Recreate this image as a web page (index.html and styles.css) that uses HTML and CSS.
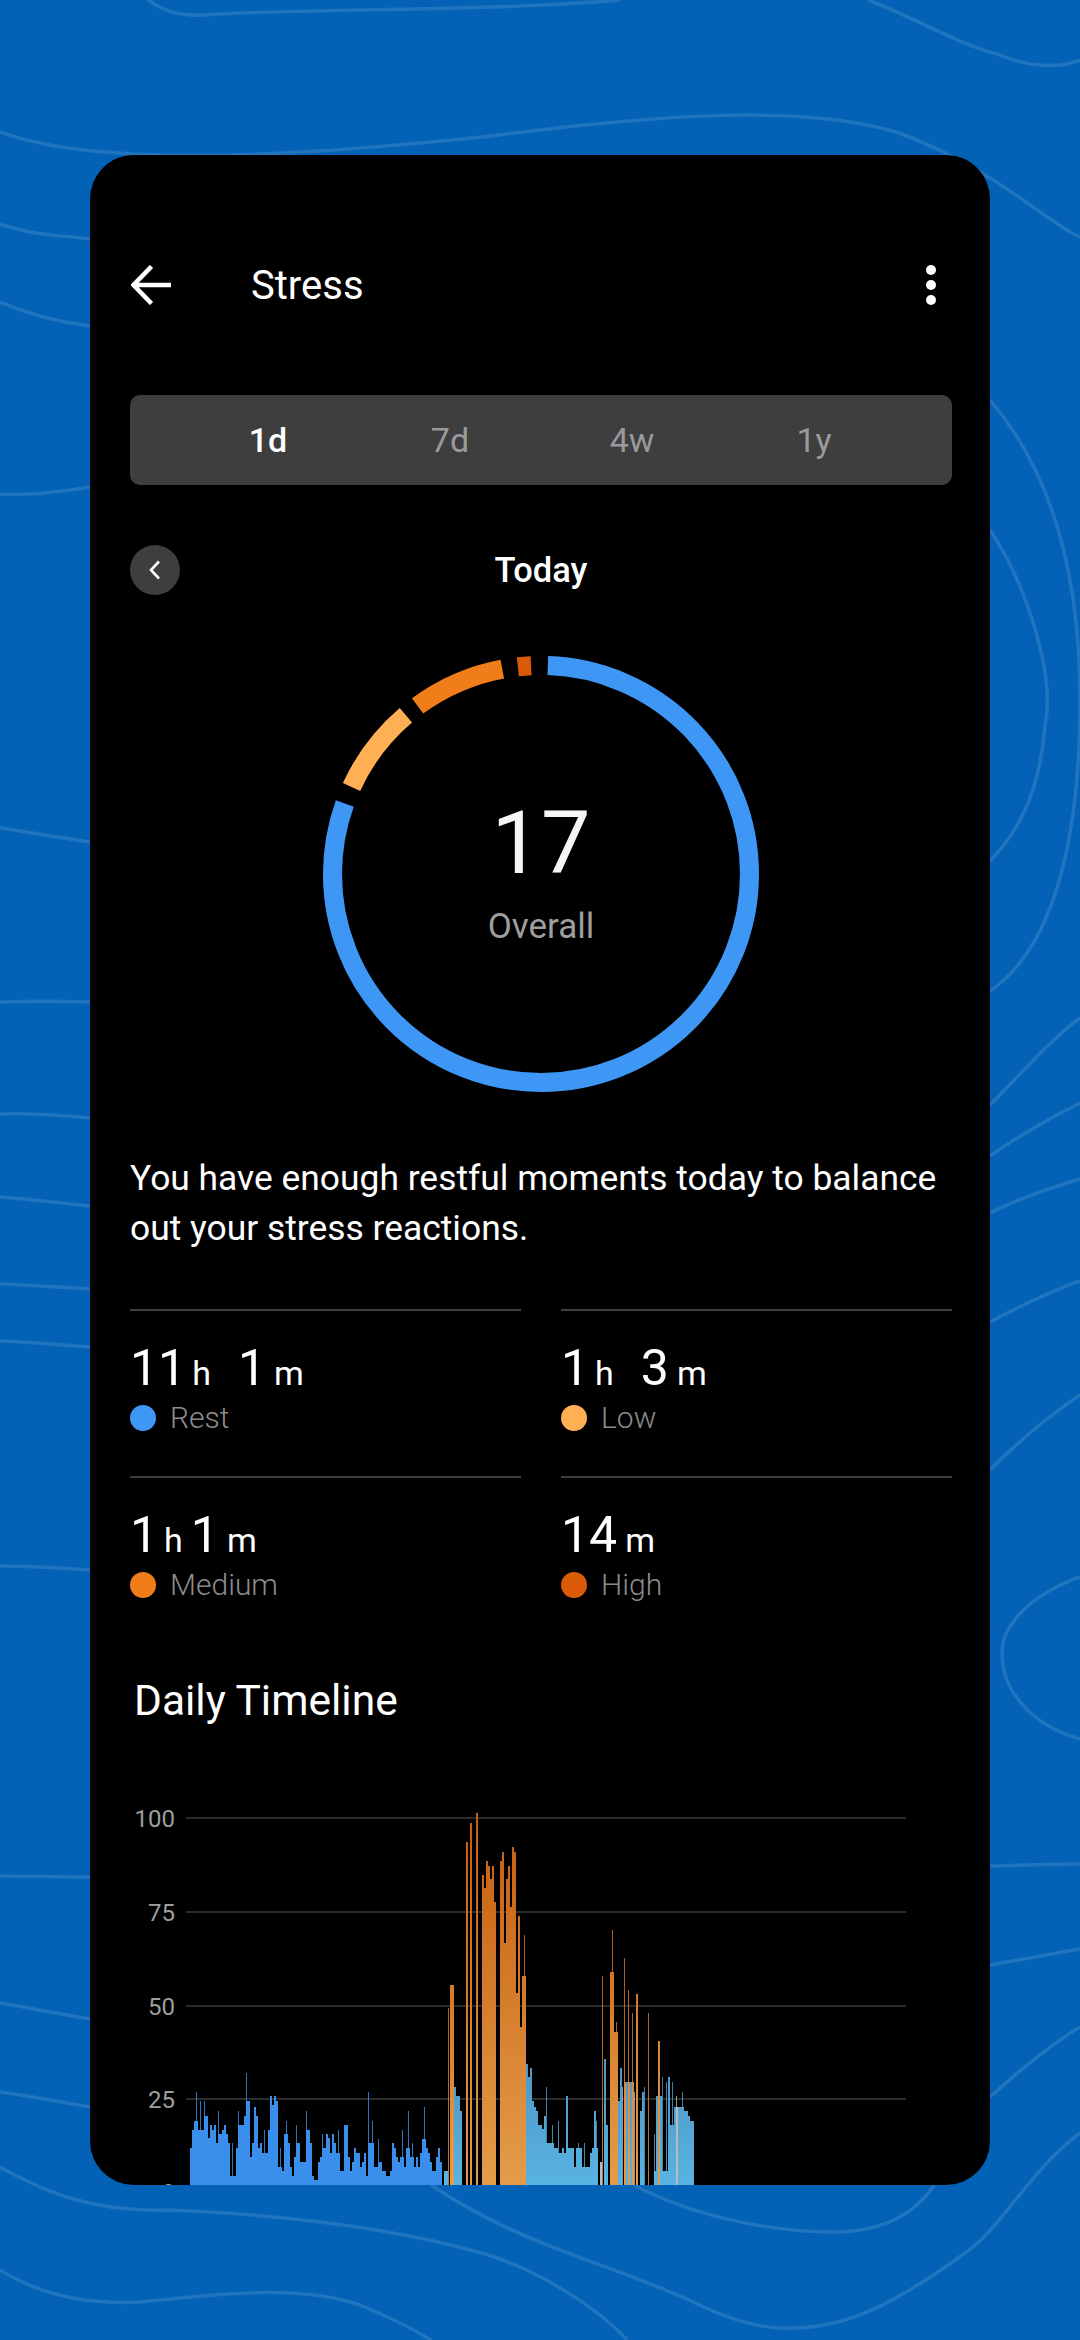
FILE: index.html
```html
<!DOCTYPE html>
<html lang="en">
<head>
  <meta charset="UTF-8">
  <meta name="viewport" content="width=device-width, initial-scale=1.0">
  <title>Stress</title>
  <link rel="stylesheet" href="styles.css">
</head>
<body>
  <svg class="bg-lines" viewBox="0 0 1080 2340" fill="none">
    <path d="M148 0C165 12 180 16 205 15C300 8 480 12 620 0"/>
    <path d="M868 0C920 20 960 45 1000 55C1030 68 1060 68 1080 60"/>
    <path d="M0 132C90 165 260 160 482 137C620 120 790 100 896 132C990 165 1050 225 1080 237"/>
    <path d="M0 224C30 235 60 235 90 239"/>
    <path d="M0 302C30 315 60 322 90 326"/>
    <path d="M0 494C30 496 60 492 90 487"/>
    <path d="M990 400C1050 470 1080 570 1080 700C1080 850 1050 950 990 991"/>
    <path d="M990 530C1030 590 1055 680 1045 725C1040 790 1020 830 990 861"/>
    <path d="M990 1105C1020 1075 1050 1040 1080 1018"/>
    <path d="M990 1156C1020 1135 1050 1118 1080 1103"/>
    <path d="M990 1213C1020 1198 1050 1188 1080 1179"/>
    <path d="M990 1322C1020 1306 1050 1292 1080 1281"/>
    <path d="M990 1470C1020 1440 1050 1415 1080 1395"/>
    <path d="M1080 1577C1030 1595 1002 1625 1002 1653C1002 1690 1030 1725 1080 1739"/>
    <path d="M990 1866C1020 1865 1050 1864 1080 1864"/>
    <path d="M990 1965C1020 1960 1050 1954 1080 1949"/>
    <path d="M990 2097C1020 2070 1050 2045 1080 2027"/>
    <path d="M0 828C30 832 60 838 90 842"/>
    <path d="M0 1002C30 1001 60 1001 90 1002"/>
    <path d="M0 1114C30 1113 60 1115 90 1118"/>
    <path d="M0 1197C30 1199 60 1203 90 1206"/>
    <path d="M0 1284C30 1285 60 1287 90 1289"/>
    <path d="M0 1341C30 1342 60 1345 90 1347"/>
    <path d="M0 1566C30 1566 60 1568 90 1570"/>
    <path d="M0 1876C30 1876 60 1877 90 1877"/>
    <path d="M0 2003C30 2008 60 2014 90 2019"/>
    <path d="M0 2092C30 2096 60 2102 90 2107"/>
    <path d="M0 2167C50 2195 95 2212 170 2210C290 2215 400 2230 482 2253C540 2270 600 2310 627 2340"/>
    <path d="M0 2270C40 2295 85 2305 140 2302C230 2292 310 2285 365 2307C395 2320 415 2330 431 2340"/>
    <path d="M431 2185C520 2245 600 2260 689 2300C725 2318 760 2330 792 2328C850 2328 900 2300 965 2253C1000 2230 1030 2170 1080 2133"/>
    <path d="M634 2185C700 2220 780 2232 834 2232C880 2232 915 2215 934 2185"/>
  </svg>

  <main class="card">
    <header class="topbar">
      <svg class="back-icon" viewBox="0 0 40 40" fill="none" stroke="#fff" stroke-width="4.500">
        <path d="M40 20H4M20.500 1.500L2.500 20L20.500 38.500"/>
      </svg>
      <h1 class="page-title">Stress</h1>
      <svg class="more-icon" viewBox="0 0 10 40" fill="#fff">
        <circle cx="5" cy="5" r="5"/>
        <circle cx="5" cy="20" r="5"/>
        <circle cx="5" cy="35" r="5"/>
      </svg>
    </header>

    <nav class="range-tabs">
      <span class="tab active">1d</span>
      <span class="tab">7d</span>
      <span class="tab">4w</span>
      <span class="tab">1y</span>
    </nav>

    <div class="date-row">
      <span class="prev-btn">
        <svg viewBox="0 0 12 20" fill="none" stroke="#fff" stroke-width="2.600">
          <path d="M10 1.500L2 10L10 18.500"/>
        </svg>
      </span>
      <span class="date-label">Today</span>
    </div>

    <section class="ring">
      <svg class="ring-svg" viewBox="0 0 440 440" fill="none" stroke-width="19">
        <circle cx="220" cy="220" r="208.500" pathLength="360" stroke="#3f97f5" stroke-dasharray="287.900 72.100" stroke-dashoffset="-1.900"/>
        <circle cx="220" cy="220" r="208.500" pathLength="360" stroke="#ffaf54" stroke-dasharray="24.900 335.100" stroke-dashoffset="-294.700"/>
        <circle cx="220" cy="220" r="208.500" pathLength="360" stroke="#f07d1a" stroke-dasharray="25.600 334.400" stroke-dashoffset="-323.700"/>
        <circle cx="220" cy="220" r="208.500" pathLength="360" stroke="#db5a07" stroke-dasharray="3.650 356.350" stroke-dashoffset="-353.600"/>
      </svg>
      <div class="ring-text">
        <div class="ring-value">17</div>
        <div class="ring-label">Overall</div>
      </div>
    </section>

    <p class="summary">You have enough restful moments today to balance<br>out your stress reactions.</p>

    <div class="stats">
      <div class="stat">
        <div class="stat-value">11<small class="hours">h</small><span class="gap"></span>1<small>m</small></div>
        <div class="stat-label"><i class="dot rest"></i>Rest</div>
      </div>
      <div class="stat">
        <div class="stat-value">1<small class="hours">h</small><span class="gap"></span>3<small>m</small></div>
        <div class="stat-label"><i class="dot low"></i>Low</div>
      </div>
      <div class="stat">
        <div class="stat-value">1<small class="hours">h</small>1<small>m</small></div>
        <div class="stat-label"><i class="dot medium"></i>Medium</div>
      </div>
      <div class="stat">
        <div class="stat-value">14<small>m</small></div>
        <div class="stat-label"><i class="dot high"></i>High</div>
      </div>
    </div>

    <h2 class="section-title">Daily Timeline</h2>

    <svg id="timeline" class="timeline" viewBox="90 1790 900 420">
      <defs>
        <linearGradient id="gradRest" gradientUnits="userSpaceOnUse" x1="0" y1="1950" x2="0" y2="2185">
          <stop offset="0" stop-color="#4a78a8"/>
          <stop offset="1" stop-color="#58b4e2"/>
        </linearGradient>
        <linearGradient id="gradStress" gradientUnits="userSpaceOnUse" x1="0" y1="1820" x2="0" y2="2185">
          <stop offset="0" stop-color="#c65e10"/>
          <stop offset="1" stop-color="#e49c4a"/>
        </linearGradient>
      </defs>
      <g class="axis">
        <text x="175" y="1827">100</text>
        <text x="175" y="1921">75</text>
        <text x="175" y="2015">50</text>
        <text x="175" y="2108">25</text>
        <text x="175" y="2201">0</text>
      </g>
      <g class="grid">
        <rect x="186" y="1817" width="720" height="2"/>
        <rect x="186" y="1911" width="720" height="2"/>
        <rect x="186" y="2005" width="720" height="2"/>
        <rect x="186" y="2098" width="720" height="2"/>
      </g>
      <g id="bars"></g>
    </svg>
  </main>

  <script src="script.js"></script>
</body>
</html>
```

FILE: styles.css
```css
* {
  box-sizing: border-box;
}

body {
  margin: 0;
  height: 2340px;
  padding-top: 155px;
  overflow: hidden;
  background-color: #0362b6;
  font-family: Roboto, sans-serif;
  color: #fff;
  position: relative;
}

.bg-lines {
  position: absolute;
  left: 0;
  top: 0;
  width: 1080px;
  height: 2340px;
}

.bg-lines path {
  stroke: #fff;
  stroke-opacity: 0.12;
  stroke-width: 3.500;
}

.card {
  position: relative;
  width: 900px;
  height: 2030px;
  margin-left: 90px;
  padding: 90px 38px 0 40px;
  background-color: #000;
  border-radius: 44px;
  overflow: hidden;
}

.topbar {
  display: flex;
  align-items: center;
  height: 80px;
}

.back-icon {
  width: 40px;
  height: 40px;
  margin-left: 1px;
}

.page-title {
  margin: 0 0 0 80px;
  font-size: 40px;
  font-weight: 400;
}

.more-icon {
  width: 10px;
  height: 44px;
  margin-left: auto;
  margin-right: 16px;
}

.range-tabs {
  display: flex;
  justify-content: center;
  align-items: center;
  height: 90px;
  margin-top: 70px;
  background-color: #3e3e3e;
  border-radius: 10px;
  font-size: 34px;
}

.tab {
  width: 182px;
  text-align: center;
  color: #9a9a9a;
}

.tab.active {
  color: #fff;
  font-weight: 500;
}

.date-row {
  position: relative;
  display: flex;
  justify-content: center;
  align-items: center;
  height: 50px;
  margin-top: 60px;
}

.prev-btn {
  position: absolute;
  left: 0;
  top: 0;
  width: 50px;
  height: 50px;
  border-radius: 50%;
  background-color: #3e3e3e;
  display: flex;
  align-items: center;
  justify-content: center;
}

.prev-btn svg {
  width: 12px;
  height: 20px;
}

.date-label {
  font-size: 34.500px;
  font-weight: 500;
}

.ring {
  position: relative;
  width: 440px;
  height: 440px;
  margin: 59px auto 0;
}

.ring-svg {
  display: block;
  width: 440px;
  height: 440px;
  transform: rotate(-90deg);
}

.ring-text {
  position: absolute;
  left: 0;
  right: 0;
  top: 139px;
  text-align: center;
}

.ring-value {
  font-size: 88px;
  font-weight: 400;
  line-height: 100px;
  color: #f5f5f5;
}

.ring-label {
  margin-top: 14px;
  font-size: 35px;
  line-height: 40px;
  color: #9e9e9e;
}

.summary {
  margin: 59px 0 0;
  font-size: 35.400px;
  line-height: 50px;
}

.stats {
  display: grid;
  grid-template-columns: 391px 391px;
  column-gap: 40px;
  margin-top: 56px;
}

.stat {
  height: 167px;
  border-top: 2px solid #3e3e3e;
  padding-top: 29px;
}

.stat-value {
  font-size: 50px;
  line-height: 56px;
}

.stat-value small {
  font-size: 34px;
  margin-left: 8px;
  margin-right: 8px;
}

.stat-value small.hours {
  margin-left: 6px;
}

.gap {
  display: inline-block;
  width: 19px;
}

.stat-label {
  display: flex;
  align-items: center;
  margin-top: -3px;
  font-size: 30px;
  line-height: 40px;
  font-weight: 300;
  color: #8c8c8c;
}

.dot {
  width: 26px;
  height: 26px;
  border-radius: 50%;
  margin-right: 14px;
}

.dot.rest {
  background-color: #3f97f5;
}

.dot.low {
  background-color: #ffaf54;
}

.dot.medium {
  background-color: #f07d1a;
}

.dot.high {
  background-color: #db5a07;
}

.section-title {
  margin: 33px 0 0 4px;
  font-size: 42.500px;
  font-weight: 400;
  line-height: 50px;
}

.timeline {
  display: block;
  width: 900px;
  height: 420px;
  margin: 64px 0 0 -40px;
}

.axis text {
  font-size: 24px;
  fill: #9e9e9e;
  text-anchor: end;
}

.grid rect {
  fill: #2b2b2b;
}
```

FILE: script.js
```js
// top of each bar as read off a 3x crop of the chart, one bar every 2px
const restTops = [1105,1050,1022,935,1050,962,1050,962,1008,1075,1035,1050,1035,1090,993,1062,1050,1035,1062,1090,1188,1090,1188,1105,993,1035,1035,1008,880,962,1130,1090,980,1008,1105,1090,1118,1050,1118,1050,948,975,948,962,1160,1105,1173,1062,1022,1090,1160,1188,1130,1035,1090,1145,1145,1145,993,1050,1090,1188,1200,1200,1145,1130,1062,1105,1062,1075,1118,1062,1090,1118,1050,1173,1173,1035,1035,1130,1173,1145,1105,1118,1118,1160,1145,1118,1188,935,1090,1022,1160,1160,1078,1145,1173,1173,1188,1188,1173,1090,1105,1130,1145,1130,1050,1160,1105,993,1130,1090,1160,1130,1160,1118,1078,980,1105,1118,1145,1173,1173,1130,1105,1145];

// [index, top, type, base]: base is where a thin spike sits on a wider bar
const laterBars = [
  [127, 1173, "r"], [128, 1173, "r"], [129, 685, "s", 1239], [130, 616, "s"], [131, 616, "s"],
  [132, 922, "r"], [133, 948, "r"], [134, 948, "r"], [135, 993, "r"],
  [138, 187, "s"], [140, 128, "s"], [143, 100, "s"],
  [146, 285, "s"], [147, 325, "s"], [148, 243, "s"], [149, 257, "s"], [150, 298, "s"], [151, 257, "s"], [152, 365, "s"],
  [155, 243, "s"], [156, 215, "s"], [157, 490, "s"], [158, 298, "s"], [159, 257, "s"], [160, 380, "s"], [161, 200, "s"], [162, 215, "s"],
  [163, 640, "s"], [164, 408, "s"], [165, 740, "s"], [166, 588, "s"], [167, 465, "s", 588],
  [168, 852, "r"], [169, 892, "r"], [170, 865, "r"], [171, 962, "r"], [172, 980, "r"], [173, 993, "r"], [174, 1035, "r"], [175, 1035, "r"],
  [176, 1048, "r"], [177, 1008, "r"], [178, 922, "r", 1090], [179, 1090, "r"], [180, 1090, "r"], [181, 1035, "r", 1090], [182, 1105, "r"], [183, 1105, "r"],
  [184, 1022, "r", 1118], [185, 1118, "r"], [186, 1105, "r"], [187, 1118, "r"], [188, 948, "r"], [189, 1105, "r"], [190, 1105, "r"], [191, 1105, "r"],
  [192, 1160, "r"], [193, 1105, "r"], [194, 1090, "r", 1105], [195, 1105, "r"], [196, 1160, "r"], [197, 1090, "r", 1160], [198, 1160, "r"], [199, 1160, "r"],
  [200, 1118, "r"], [201, 1105, "r"], [202, 993, "r"], [203, 1022, "r", 1105], [205, 1145, "w"], [206, 588, "s", 1239], [207, 838, "r"], [208, 1035, "r"],
  [210, 575, "s"], [211, 450, "s", 575], [212, 755, "s"], [213, 727, "s", 755], [214, 962, "r"], [215, 865, "r"], [216, 920, "w", 1239], [217, 533, "s", 907],
  [218, 907, "r"], [219, 630, "s", 907], [220, 907, "r"], [221, 700, "s", 907], [222, 935, "w", 1239], [223, 643, "s"],
  [225, 993, "r"], [226, 935, "r"], [227, 922, "r", 1239], [229, 700, "s", 1239], [232, 1062, "r", 1173], [233, 948, "r"], [234, 782, "s"],
  [235, 948, "r"], [236, 892, "r", 1173], [237, 1173, "r"], [238, 907, "r", 1173], [239, 892, "r"], [240, 1035, "r"], [241, 907, "r", 1035], [242, 980, "r"],
  [243, 948, "w", 980], [244, 980, "r"], [245, 980, "r"], [246, 935, "r", 980], [247, 993, "r"], [248, 993, "r"], [249, 1008, "r"], [250, 1022, "r"], [251, 1022, "r"]
];

const fills = { e: "#3b8fec", r: "url(#gradRest)", s: "url(#gradStress)", w: "#b9bcbe" };

function addBar(index, cropTop, type, width, opacity) {
  const top = 1780 + cropTop / 3;
  const bar = document.createElementNS("http://www.w3.org/2000/svg", "rect");
  bar.setAttribute("x", 190 + index * 2);
  bar.setAttribute("y", top);
  bar.setAttribute("width", width);
  bar.setAttribute("height", 2185 - top);
  bar.setAttribute("fill", fills[type]);
  bar.setAttribute("fill-opacity", opacity);
  bar.setAttribute("shape-rendering", "crispEdges");
  document.getElementById("bars").appendChild(bar);
}

function addSpike(index, top, base, type) {
  addBar(index, top, type, 1, 0.8);
  if (base < 1239) {
    addBar(index, base, type, 2, 1);
  }
}

restTops.forEach(function(top, i) {
  const prev = restTops[i - 1] || 1239;
  const next = restTops[i + 1] || 1239;
  if (prev - top > 35 && next - top > 35) {
    addSpike(i, top, Math.min(prev, next), "e");
  } else {
    addBar(i, top, "e", 2, 1);
  }
});

laterBars.forEach(function(item) {
  if (item[3]) {
    addSpike(item[0], item[1], item[3], item[2]);
  } else {
    addBar(item[0], item[1], item[2], 2, 1);
  }
});
```
